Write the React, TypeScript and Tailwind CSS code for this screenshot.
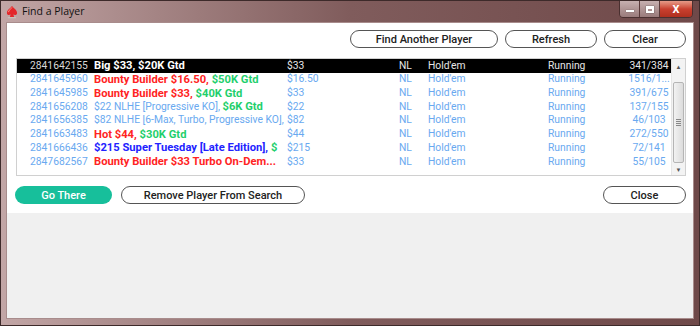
import React from 'react';

type Part = { t: string; c: string; b?: boolean };

type Row = {
    id: string;
    name: Part[];
    buyIn: string;
    entries: string;
};

const RED = 'text-[#ff2323]';
const GREEN = 'text-[#1fcf6c]';
const BLUE = 'text-[#2222ff]';
const SOFT = 'text-[#69a9f0]';

const rows: Row[] = [
    { id: '2841642155', name: [{ t: 'Big $33, $20K Gtd', c: 'text-white', b: true }], buyIn: '$33', entries: '341/384' },
    { id: '2841645960', name: [{ t: 'Bounty Builder $16.50', c: RED, b: true }, { t: ', ', c: RED, b: true }, { t: '$50K Gtd', c: GREEN, b: true }], buyIn: '$16.50', entries: '1516/1...' },
    { id: '2841645985', name: [{ t: 'Bounty Builder $33', c: RED, b: true }, { t: ', ', c: RED, b: true }, { t: '$40K Gtd', c: GREEN, b: true }], buyIn: '$33', entries: '391/675' },
    { id: '2841656208', name: [{ t: '$22 NLHE [Progressive KO]', c: SOFT }, { t: ', ', c: SOFT }, { t: '$6K Gtd', c: GREEN, b: true }], buyIn: '$22', entries: '137/155' },
    { id: '2841656385', name: [{ t: '$82 NLHE [6-Max, Turbo, Progressive KO], :', c: SOFT }], buyIn: '$82', entries: '46/103' },
    { id: '2841663483', name: [{ t: 'Hot $44', c: RED, b: true }, { t: ', ', c: RED, b: true }, { t: '$30K Gtd', c: GREEN, b: true }], buyIn: '$44', entries: '272/550' },
    { id: '2841666436', name: [{ t: '$215 Super Tuesday [Late Edition]', c: BLUE, b: true }, { t: ', ', c: BLUE, b: true }, { t: '$', c: GREEN, b: true }], buyIn: '$215', entries: '72/141' },
    { id: '2847682567', name: [{ t: 'Bounty Builder $33 Turbo On-Dem...', c: RED, b: true }], buyIn: '$33', entries: '55/105' },
];

function Spade() {
    return (
        <svg width="12" height="14" viewBox="0 0 13 14">
            <path d="M6.5 0.5 C4.5 3 1 5 1 8 C1 10 3 11 5 9.8 L4.2 12.5 L8.8 12.5 L8 9.8 C10 11 12 10 12 8 C12 5 8.5 3 6.5 0.5 Z" fill="#e3262a" />
            <path d="M6.5 2 C5.3 3.6 3 5.2 2.6 7.2" stroke="#ff9a8a" strokeWidth="1" fill="none" />
            <rect x="2" y="12.5" width="9" height="1.2" rx="0.6" fill="#c9c0b8" />
        </svg>
    );
}

function PillButton({ label, w, primary }: { label: string; w: string; primary?: boolean }) {
    return (
        <button
            className={`${w} h-[18px] rounded-full text-[11px] font-medium leading-none flex items-center justify-center ${
                primary ? 'bg-[#17bf9b] text-white' : 'bg-white border border-[#555] text-[#222]'
            }`}
        >
            {label}
        </button>
    );
}

function Scrollbar() {
    return (
        <div className="w-[14px] h-full flex flex-col items-center bg-[#f3f3f3] border-l border-[#e6e6e6]">
            <div className="h-[14px] flex items-center justify-center text-[6px] text-[#555]">▲</div>
            <div className="w-[11px] h-[81px] mt-[9px] rounded-[2px] border border-[#b5b5b5] bg-gradient-to-r from-[#f2f2f2] to-[#dcdcdc] flex items-center justify-center">
                <div className="flex flex-col gap-[1px]">
                    <div className="w-[5px] h-px bg-[#888]" />
                    <div className="w-[5px] h-px bg-[#888]" />
                    <div className="w-[5px] h-px bg-[#888]" />
                    <div className="w-[5px] h-px bg-[#888]" />
                </div>
            </div>
            <div className="mt-auto h-[12px] flex items-center justify-center text-[6px] text-[#555]">▼</div>
        </div>
    );
}

export default function App() {
    return (
        <div
            className="w-[700px] h-[326px] flex flex-col bg-gradient-to-r from-[#c2a6a6] via-[#805c5c] to-[#6f4949] border border-[#3d2a2a] overflow-hidden"
            style={{ fontFamily: 'Roboto, "Noto Sans", sans-serif' }}
        >
            {/* title bar */}
            <div className="h-[21px] flex items-start shrink-0">
                <div className="flex items-center gap-[4px] pl-[5px] pt-[3px]">
                    <Spade />
                    <span className="text-[10.5px] text-[#111]" style={{ fontFamily: '"Open Sans", "Noto Sans", sans-serif' }}>Find a Player</span>
                </div>
                <div className="ml-auto mr-[6px] flex h-[18px] -mt-px border border-[#4a3030] rounded-b-[4px] overflow-hidden">
                    <div className="w-[20px] bg-gradient-to-b from-[#c7b0b0] to-[#9a7b7b] border-r border-[#5a3a3a] flex items-center justify-center">
                        <div className="w-[8px] h-[2px] bg-white mt-[4px] shadow-[0_0_1px_#333]" />
                    </div>
                    <div className="w-[20px] bg-gradient-to-b from-[#c7b0b0] to-[#9a7b7b] border-r border-[#5a3a3a] flex items-center justify-center">
                        <div className="w-[8px] h-[7px] border-2 border-white border-t-[3px] shadow-[0_0_1px_#333]" />
                    </div>
                    <div className="w-[32px] bg-gradient-to-b from-[#e69a88] via-[#c9402f] to-[#b0301f] flex items-center justify-center text-white text-[11px] font-bold leading-none">
                        X
                    </div>
                </div>
            </div>

            {/* client area */}
            <div className="flex-1 mx-[5px] mb-[6px] border border-[#a88c8c] bg-[#f0f0f0] flex flex-col">
                <div className="bg-white h-[190px] flex flex-col px-[7px] pt-[7px]">
                    <div className="flex justify-end gap-[7px]">
                        <PillButton label="Find Another Player" w="w-[148px]" />
                        <PillButton label="Refresh" w="w-[92px]" />
                        <PillButton label="Clear" w="w-[82px]" />
                    </div>

                    {/* tournament list */}
                    <div className="mt-[10px] ml-[2px] h-[118px] border border-[#d0d0d0] flex">
                        <div className="flex-1 flex flex-col overflow-hidden">
                            {rows.map((r, i) => {
                                const sel = i === 0;
                                const cell = sel ? 'text-[#e6e6e6]' : SOFT;
                                return (
                                    <div
                                        key={r.id}
                                        className={`h-[13.7px] flex items-center text-[10.3px] leading-none whitespace-nowrap ${sel ? 'bg-black' : ''}`}
                                    >
                                        <div className={`w-[77px] shrink-0 pl-[13px] ${sel ? 'text-[#d8d8d8]' : SOFT}`}>{r.id}</div>
                                        <div className="w-[190px] shrink-0 overflow-hidden">
                                            {r.name.map((p, j) => (
                                                <span key={j} className={`${p.c} ${p.b ? 'font-bold text-[11.2px]' : ''}`}>{p.t}</span>
                                            ))}
                                        </div>
                                        <div className={`w-[115px] shrink-0 pl-[3px] ${cell}`}>{r.buyIn}</div>
                                        <div className={`w-[29px] shrink-0 ${cell}`}>NL</div>
                                        <div className={`w-[120px] shrink-0 ${cell}`}>Hold'em</div>
                                        <div className={`w-[79px] shrink-0 ${cell}`}>Running</div>
                                        <div className={`w-[44px] shrink-0 text-center ${cell}`}>{r.entries}</div>
                                    </div>
                                );
                            })}
                        </div>
                        <Scrollbar />
                    </div>

                    <div className="mt-[10px] flex gap-[9px] pl-[1px]">
                        <PillButton label="Go There" w="w-[97px]" primary />
                        <PillButton label="Remove Player From Search" w="w-[184px]" />
                        <div className="ml-auto">
                            <PillButton label="Close" w="w-[83px]" />
                        </div>
                    </div>
                </div>
            </div>
        </div>
    );
}
